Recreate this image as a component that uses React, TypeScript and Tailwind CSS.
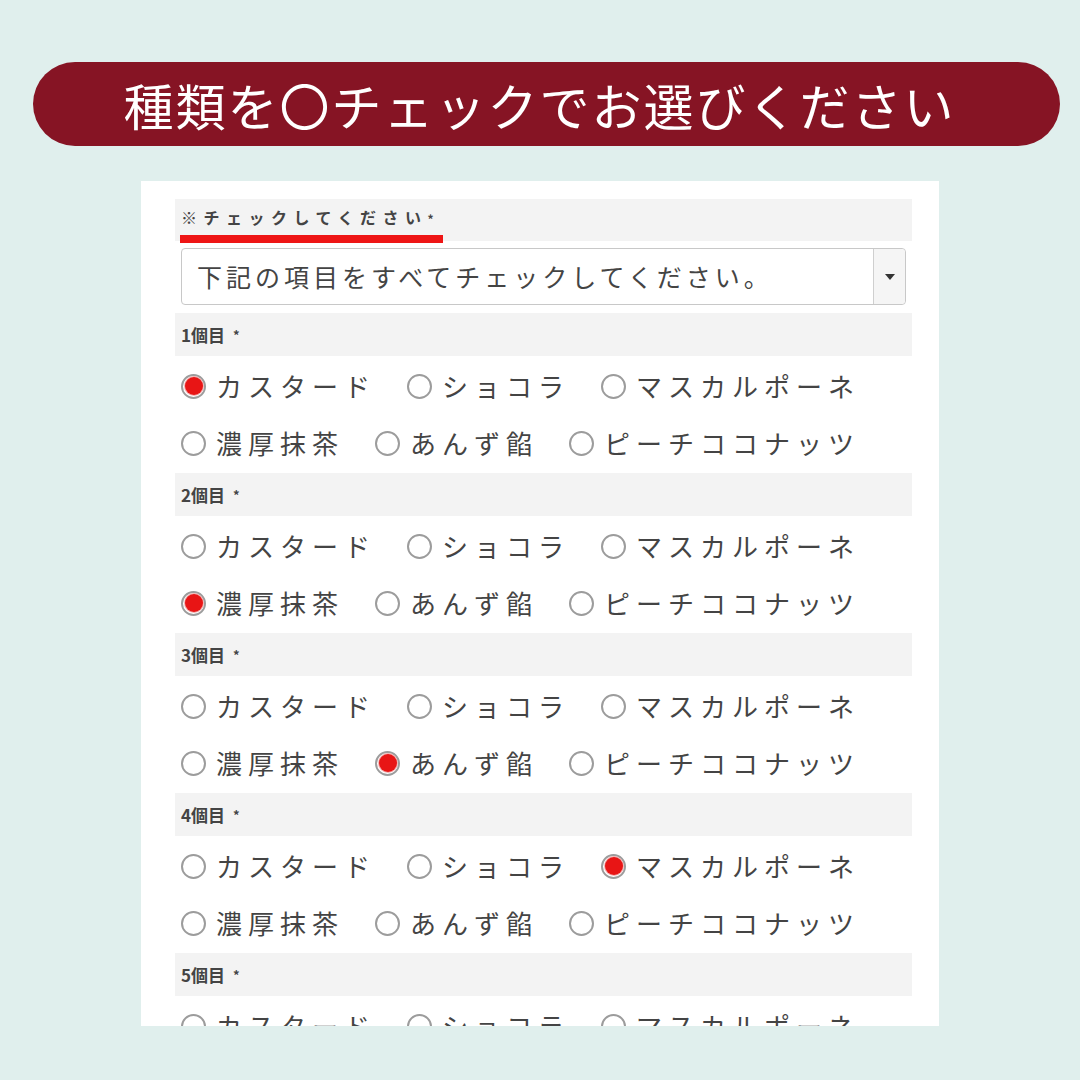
import React from "react";

const FONT = '"Noto Sans CJK JP", "Noto Sans", sans-serif';

const row1 = ["カスタード", "ショコラ", "マスカルポーネ"];
const row2 = ["濃厚抹茶", "あんず餡", "ピーチココナッツ"];

const selected = ["カスタード", "濃厚抹茶", "あんず餡", "マスカルポーネ", ""];

function Radio({ on }: { on: boolean }) {
  return (
    <span className="w-[25px] h-[25px] rounded-full border-2 border-[#9c9c9c] bg-white flex items-center justify-center shrink-0">
      {on && <span className="w-[18px] h-[18px] rounded-full bg-[#e81515] ring-1 ring-[#f3b0b0]" />}
    </span>
  );
}

function Option({ label, on }: { label: string; on: boolean }) {
  return (
    <div className="flex items-center mr-[31px]">
      <Radio on={on} />
      <span className="ml-[10px] text-[26px] tracking-[6px] text-[#444] leading-none">{label}</span>
    </div>
  );
}

function Block({ n, sel }: { n: number; sel: string }) {
  return (
    <div>
      <div className="h-[43px] bg-[#f3f3f3] flex items-center pl-[6px] text-[17px] font-bold text-[#444]">
        <span>{n}個目</span>
        <span className="ml-[8px] text-[13px]">*</span>
      </div>
      <div className="pl-[6px] pb-[3px]">
        <div className="h-[60px] flex items-center">
          {row1.map((l) => (
            <Option key={l} label={l} on={l === sel} />
          ))}
        </div>
        <div className="h-[54px] flex items-center">
          {row2.map((l) => (
            <Option key={l} label={l} on={l === sel} />
          ))}
        </div>
      </div>
    </div>
  );
}

export default function App() {
  return (
    <div className="w-[1080px] h-[1080px] bg-[#e0efed] overflow-hidden" style={{ fontFamily: FONT }}>
      <div className="pt-[62px] pl-[33px] pr-[20px]">
        <div className="h-[84px] rounded-full bg-[#861424] flex items-center justify-center">
          <span className="text-white text-[50px] tracking-[2px] leading-none pr-[14px]">種類を〇チェックでお選びください</span>
        </div>
      </div>
      <div className="mt-[35px] ml-[141px] w-[798px] h-[845px] bg-white overflow-hidden pt-[18px] pl-[34px] pr-[27px]">
        <div className="h-[42px] bg-[#f3f3f3] pl-[6px] relative">
          <div className="pt-[10px] text-[16px] font-bold tracking-[6.5px] text-[#444] leading-none">
            ※チェックしてください<span className="text-[12px]">*</span>
          </div>
          <div className="absolute left-[5px] top-[36px] w-[263px] h-[8px] bg-[#ee1515]" />
        </div>
        <div className="px-[6px] pt-[7px] pb-[8px]">
          <div className="h-[57px] border border-[#c8c8c8] rounded-[4px] flex items-stretch bg-white">
            <div className="flex-1 flex items-center pl-[15px] text-[25px] tracking-[4px] text-[#444]">
              下記の項目をすべてチェックしてください。
            </div>
            <div className="w-[32px] bg-[#f5f5f5] border-l border-[#cfcfcf] rounded-r-[4px] flex items-center justify-center">
              <svg width="10" height="6" viewBox="0 0 10 6">
                <path d="M0 0 L10 0 L5 6 Z" fill="#333" />
              </svg>
            </div>
          </div>
        </div>
        {selected.map((s, i) => (
          <Block key={i} n={i + 1} sel={s} />
        ))}
      </div>
    </div>
  );
}
